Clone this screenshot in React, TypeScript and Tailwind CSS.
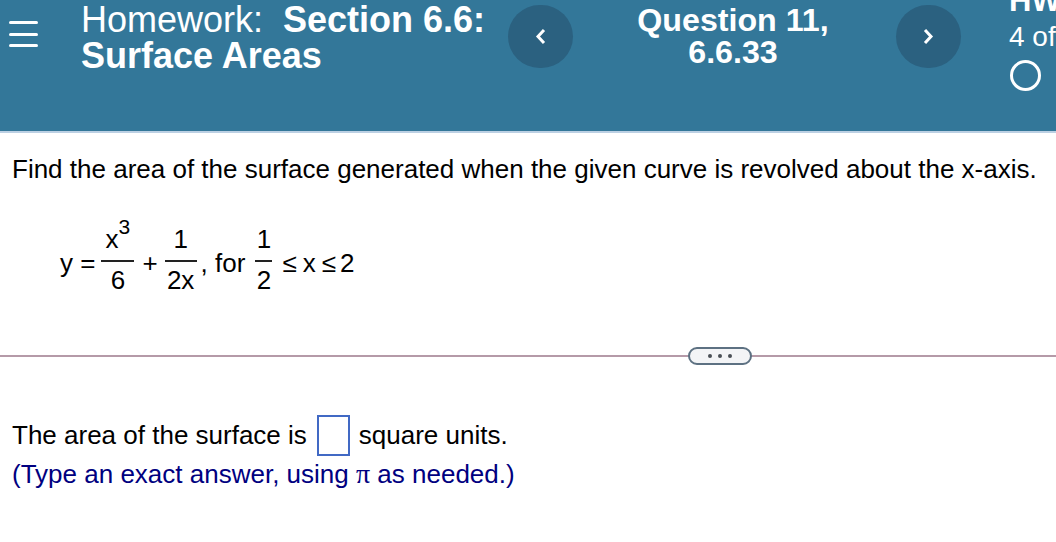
import React from "react";

function Frac({ top, bottom, w }: { top: React.ReactNode; bottom: string; w: string }) {
  return (
    <span className={`inline-flex flex-col items-center ${w}`}>
      <span className="h-[35px] flex items-end leading-[26px] pb-[8px]">{top}</span>
      <span className="w-full h-[1.5px] bg-[#222]" />
      <span className="h-[35px] leading-[36px]">{bottom}</span>
    </span>
  );
}

function Circle({ children }: { children: React.ReactNode }) {
  return (
    <div className="w-[65px] h-[63px] rounded-full bg-[#2b6180] flex items-center justify-center shrink-0">
      {children}
    </div>
  );
}

export default function App() {
  return (
    <div className="w-[1056px] h-[542px] overflow-hidden bg-white font-['Liberation_Sans',Arial,sans-serif] text-black">
      <header className="h-[133px] bg-[#337799] border-b-2 border-[#bcd0e3] flex text-white overflow-hidden">
        <div className="w-[81px] shrink-0 pl-[9px] pt-[21px] flex flex-col gap-[8.5px]">
          <span className="block w-[29px] h-[3px] rounded-full bg-white" />
          <span className="block w-[29px] h-[3px] rounded-full bg-white" />
          <span className="block w-[29px] h-[3px] rounded-full bg-white" />
        </div>
        <div className="w-[427px] shrink-0 pt-[2px] text-[36px] leading-[35.5px] whitespace-nowrap">
          <span>Homework:</span>
          <b className="ml-[20px]">Section 6.6:</b>
          <br />
          <b>Surface Areas</b>
        </div>
        <div className="pt-[5px] shrink-0">
          <Circle>
            <svg width="12" height="17" viewBox="0 0 12 17" fill="none" stroke="white" strokeWidth="3"><path d="M9 2 L3 8.5 L9 15" /></svg>
          </Circle>
        </div>
        <div className="w-[323px] shrink-0 pt-[5px] pr-[3px] text-center font-bold text-[32.2px] leading-[31.5px] whitespace-nowrap">
          Question 11,
          <br />
          6.6.33
        </div>
        <div className="pt-[5px] shrink-0">
          <Circle>
            <svg width="12" height="17" viewBox="0 0 12 17" fill="none" stroke="white" strokeWidth="3"><path d="M2 2 L8 8.5 L2 15" /></svg>
          </Circle>
        </div>
        <div className="pl-[48px] -mt-[17px] whitespace-nowrap">
          <div className="font-bold text-[31px] leading-[36px]">HW</div>
          <div className="text-[28px] leading-[30px] mt-[3px]">4 of</div>
          <div className="mt-[8px] ml-[1px] w-[31px] h-[31px] rounded-full border-[3px] border-white" />
        </div>
      </header>

      <main className="text-[26px]">
        <p className="pl-[12px] pt-[19px] leading-[34px] whitespace-nowrap">
          Find the area of the surface generated when the given curve is revolved about the x-axis.
        </p>
        <div className="pl-[60px] pt-[39px] flex items-center leading-none whitespace-nowrap">
          <span className="pt-[5px] mr-[6px]">y =</span>
          <Frac w="w-[33px]" top={<span className="flex items-start">x<span className="text-[21px] leading-none -mt-[10px]">3</span></span>} bottom="6" />
          <span className="pt-[4px] ml-[8px] mr-[7px]">+</span>
          <Frac w="w-[32px]" top="1" bottom="2x" />
          <span className="pt-[4px] ml-[4px] mr-[10px]">, for</span>
          <Frac w="w-[17px]" top="1" bottom="2" />
          <span className="pt-[4px] ml-[10px]">≤</span>
          <span className="pt-[4px] ml-[6px]">x</span>
          <span className="pt-[4px] ml-[6px]">≤</span>
          <span className="pt-[4px] ml-[4px]">2</span>
        </div>
        <div className="mt-[50px] relative h-[18px] flex items-center">
          <div className="w-full h-[2px] bg-[#b59aa8]" />
          <div className="absolute left-[688px] top-0 w-[64px] h-[18px] rounded-full border-2 border-[#5d7182] bg-[#f3f4f6] flex items-center justify-center gap-[6px]">
            <span className="w-[4px] h-[4px] rounded-full bg-[#4a4f55]" />
            <span className="w-[4px] h-[4px] rounded-full bg-[#4a4f55]" />
            <span className="w-[4px] h-[4px] rounded-full bg-[#4a4f55]" />
          </div>
        </div>
        <div className="pl-[12px] pt-[50px] flex items-center whitespace-nowrap">
          <span>The area of the surface is</span>
          <span className="w-[33px] h-[41px] border-2 border-[#4169c4] ml-[10px] mr-[9px]" />
          <span>square units.</span>
        </div>
        <p className="pl-[12px] leading-[36px] text-[#000080] whitespace-nowrap">
          (Type an exact answer, using <span className="font-['Liberation_Serif',serif] text-[28px]">π</span> as needed.)
        </p>
      </main>
    </div>
  );
}
